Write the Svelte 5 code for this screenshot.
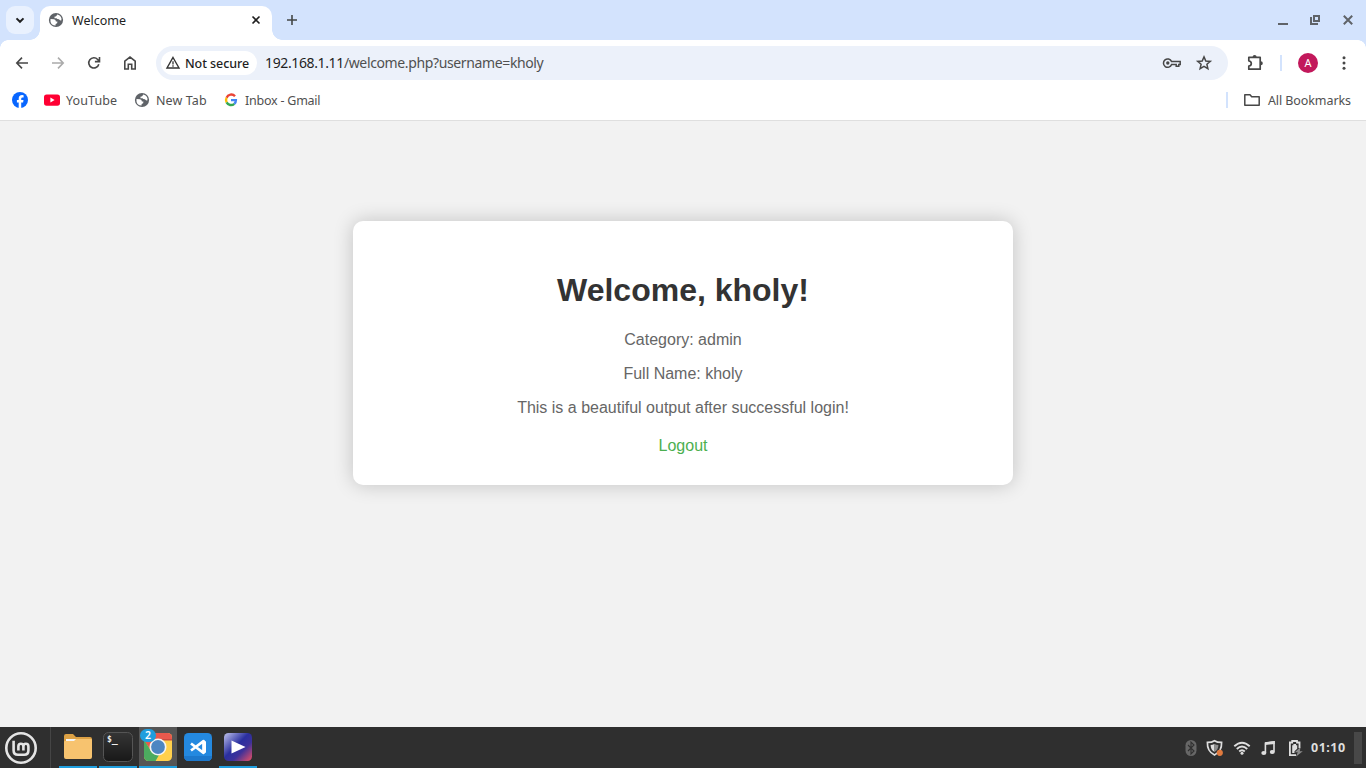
<script>
  const bookmarks = [
    { icon: 'youtube', label: 'YouTube', w: 90, spacing: 0.1 },
    { icon: 'globe', label: 'New Tab', w: 89, spacing: 0.1 },
    { icon: 'google', label: 'Inbox - Gmail', w: 100, spacing: -0.23 }
  ];
</script>

{#snippet globe()}
  <svg width="16" height="16" viewBox="0 0 16 16">
    <circle cx="8" cy="8" r="7.1" fill="#5f6368" />
    <path d="M2.5 7.1 L6 7.2 Q7.9 7.6 7.9 9.4 H9.4 Q9.8 11.6 7.6 11.9 V13.6 Q3.1 13.4 2.5 9.4Z M9.1 2.5 Q12.6 3.2 13.5 6.6 L13.3 8.4 Q11.4 8.7 11 7.3 Q8.8 7.3 8.5 6.3 H6.5 V4.6 Q8.8 4.9 9.1 2.5Z" fill="#fff" />
  </svg>
{/snippet}

<div class="screen">
  <header class="tabs">
    <div class="search-tabs">
      <svg width="28" height="28" viewBox="0 0 28 28"><path d="M10.5 12.4 L14 15.8 L17.5 12.4" fill="none" stroke="#1f1f1f" stroke-width="2" /></svg>
    </div>
    <div class="tab">
      {@render globe()}
      <span class="tab-title">Welcome</span>
      <svg width="16" height="16" viewBox="0 0 16 16"><path d="M4.5 4.5l7 7M11.5 4.5l-7 7" stroke="#1f1f1f" stroke-width="1.6" /></svg>
    </div>
    <svg class="new-tab" width="20" height="20" viewBox="0 0 20 20"><path d="M10 5v10M5 10h10" stroke="#444746" stroke-width="1.6" /></svg>
    <div class="window-buttons">
      <svg width="16" height="16" viewBox="0 0 16 16"><path d="M3 12h10" stroke="#5f6368" stroke-width="2" /></svg>
      <svg width="16" height="16" viewBox="0 0 16 16"><path d="M7 4h5v5H7z M4 5v7h7" fill="none" stroke="#5f6368" stroke-width="2" /></svg>
      <svg width="16" height="16" viewBox="0 0 16 16"><path d="M3.8 3.8l8.4 8.4M12.2 3.8l-8.4 8.4" stroke="#5f6368" stroke-width="2" /></svg>
    </div>
  </header>

  <div class="chrome">
    <nav class="toolbar">
      <div class="nav-buttons">
        <svg width="20" height="20" viewBox="0 0 20 20"><path d="M16 10H5M10 4.6L4.8 10l5.2 5.4" fill="none" stroke="#474747" stroke-width="1.6" /></svg>
        <svg width="20" height="20" viewBox="0 0 20 20"><path d="M4 10h11M10 4.6l5.2 5.4-5.2 5.4" fill="none" stroke="#ababab" stroke-width="1.6" /></svg>
        <svg width="20" height="20" viewBox="0 0 20 20"><path d="M14.8 11.2A5.1 5.1 0 1 1 13.7 6.5L15 8M15.5 4v4.6h-4.6" fill="none" stroke="#474747" stroke-width="1.6" /></svg>
        <svg width="20" height="20" viewBox="0 0 20 20"><path d="M4.8 16V8.1L10 4.1l5.2 4V16h-3.5v-4.8H8.3V16z" fill="none" stroke="#474747" stroke-width="1.6" /></svg>
      </div>
      <div class="omnibox">
        <div class="security">
          <svg width="16" height="16" viewBox="0 0 16 16"><path d="M8 2.500L14 13H2z" fill="none" stroke="#333" stroke-width="1.400" /><path d="M8 6.300v3.200M8 10.300v1.500" stroke="#333" stroke-width="1.300" /></svg>
          <span>Not secure</span>
        </div>
        <span class="url"><b>192.168.1.11</b>/welcome.php?username=kholy</span>
        <div class="omni-actions">
          <svg width="20" height="20" viewBox="0 0 20 20" fill="none" stroke="#474747" stroke-width="1.5"><path d="M9.500 8.400H18.200V11.600H16.800V13.300H14.200V11.600H9.600A4.200 4.200 0 1 1 9.500 8.400Z" /><circle cx="5.800" cy="10" r="1.700" fill="#474747" stroke="none" /></svg>
          <svg width="20" height="20" viewBox="0 0 20 20"><path d="M10 3.900l1.800 4.100 4.500.4-3.400 2.900 1 4.400-3.900-2.300-3.900 2.300 1-4.400-3.400-2.900 4.500-.4z" fill="none" stroke="#474747" stroke-width="1.500" /></svg>
        </div>
      </div>
      <svg class="puzzle" width="20" height="20" viewBox="0 0 20 20"><path d="M3.800 4.400H15.200V16.200H3.800V13.200Q6.300 12.800 6.300 10.500T3.800 7.800Z" fill="none" stroke="#474747" stroke-width="1.700" stroke-linejoin="round" /><path d="M7.600 4a2 2 0 0 1 4 0M15.800 8.300a2 2 0 0 1 0 4" fill="#474747" /></svg>
      <i class="divider"></i>
      <div class="avatar">A</div>
      <svg class="menu" width="16" height="20" viewBox="0 0 16 20" fill="#474747"><circle cx="8" cy="4.700" r="1.500" /><circle cx="8" cy="10" r="1.500" /><circle cx="8" cy="15.300" r="1.500" /></svg>
    </nav>

    <div class="bookmarks">
      <svg class="facebook" width="16" height="16" viewBox="0 0 16 16"><circle cx="8" cy="8" r="8" fill="#0866ff" /><path d="M6.700 15.900V10.500H4.900V8h1.800V6.800C6.700 4.200 7.800 3 10.200 3q.9 0 1.400.2v2.200h-.9C9.500 5.400 9.200 5.900 9.200 7v1h2.300l-.4 2.500H9.200v5.400z" fill="#fff" /></svg>
      {#each bookmarks as b}
        <div class="bookmark" style:width="{b.w}px" style:letter-spacing="{b.spacing}px">
          {#if b.icon === 'youtube'}
            <svg width="16" height="16" viewBox="0 0 16 16"><rect y="2.400" width="16" height="11.300" rx="2.600" fill="#ff0033" /><path d="M6.400 5.600v4.800L10.600 8z" fill="#fff" /></svg>
          {:else if b.icon === 'globe'}
            {@render globe()}
          {:else}
            <svg width="16" height="16" viewBox="0 0 16 16" fill="none" stroke-width="2.400"><path d="M12 4.200A5 5 0 0 0 3.600 5.700" stroke="#ea4335" /><path d="M3.600 5.700A5 5 0 0 0 3.600 10.400" stroke="#fbbc04" /><path d="M3.600 10.400A5 5 0 0 0 11.300 11.800" stroke="#34a853" /><path d="M11.300 11.800A4.800 4.800 0 0 0 12.900 8.100H8" stroke="#4285f4" /></svg>
          {/if}
          <span>{b.label}</span>
        </div>
      {/each}
      <div class="all-bookmarks">
        <i class="divider"></i>
        <svg width="18" height="16" viewBox="0 0 18 16"><path d="M1.800 2.800H7l1.700 2H16.200V13.200H1.800z" fill="none" stroke="#474747" stroke-width="1.500" stroke-linejoin="round" /></svg>
        <span>All Bookmarks</span>
      </div>
    </div>
  </div>

  <main>
    <section class="card">
      <h1>Welcome, kholy!</h1>
      <p>Category: admin</p>
      <p>Full Name: kholy</p>
      <p>This is a beautiful output after successful login!</p>
      <a href="#logout">Logout</a>
    </section>
  </main>

  <footer>
    <div class="start">
      <svg width="34" height="34" viewBox="0 0 34 34" fill="none" stroke="#e4e4e4"><circle cx="17" cy="17" r="14.700" stroke-width="2.600" /><path d="M9.600 9.700V19.500Q9.600 23.700 14 23.700H20.200Q24.400 23.700 24.400 19.500V15.400Q24.400 12.800 21.900 12.800T19.400 15.400V19.500M19.400 15.400Q19.400 12.800 16.900 12.800T14.400 15.400V19.500" stroke-width="2.600" /></svg>
    </div>
    <div class="apps">
      <div class="app open">
        <svg width="30" height="30" viewBox="0 0 30 30"><path d="M1 4q0-2 2-2h7l3 3h14q2 0 2 2v10H1z" fill="#dca145" /><path d="M3 7h24v4H3z" fill="#f4f4f4" /><path d="M1 10q0-1 1-1h9l2-2h15q1 0 1 1v17q0 2-2 2H3q-2 0-2-2z" fill="#f7c36f" /></svg>
      </div>
      <div class="app open">
        <svg width="30" height="30" viewBox="0 0 30 30"><defs><linearGradient id="term" x2="0" y2="1"><stop stop-color="#353535" /><stop offset="1" stop-color="#181818" /></linearGradient></defs><rect x=".5" y=".5" width="29" height="29" rx="5" fill="url(#term)" stroke="#555" /><text x="4" y="9.500" class="prompt">$<tspan class="cursor">_</tspan></text></svg>
      </div>
      <div class="app open active">
        <svg width="30" height="30" viewBox="0 0 30 30"><defs><clipPath id="tile"><rect x="1" y="1" width="28" height="28" rx="4.500" /></clipPath></defs><g clip-path="url(#tile)"><path d="M0 0h30v30H0z" fill="#ffd04c" /><path d="M0 0h30v7H15L7 17 0 7z" fill="#e9594d" /><path d="M0 6L8 19l8 4-4 7H0z" fill="#4cab5f" /><path d="M15 7h15v1.500H15z" fill="#c94b3f" /></g><circle cx="15" cy="15" r="8.500" fill="#f4f4f4" /><circle cx="15" cy="15" r="6.900" fill="#4d86c2" /></svg>
        <span class="badge">2</span>
      </div>
      <div class="app">
        <svg width="30" height="30" viewBox="0 0 30 30"><rect x="1" y="1" width="28" height="28" rx="4.500" fill="#2489e0" /><path d="M1 24q0 5 5 5h18q5 0 5-5" fill="#1d78cc" /><path d="M8 11.500L20.500 20.800V9.200L8 18.500" fill="none" stroke="#fff" stroke-width="2.700" stroke-linejoin="round" /><path d="M20 8l3 1.500v11L20 22z" fill="#fff" /></svg>
      </div>
      <div class="app open">
        <svg width="30" height="30" viewBox="0 0 30 30"><defs><linearGradient id="play" x2="1" y2="1"><stop stop-color="#c0c4ee" /><stop offset=".45" stop-color="#2a2f9f" /><stop offset=".65" stop-color="#3d319a" /><stop offset="1" stop-color="#ec5064" /></linearGradient></defs><rect x="1" y="1" width="28" height="28" rx="4.500" fill="url(#play)" /><path d="M8.500 8.500v13L22.500 15z" fill="#fff" /></svg>
      </div>
    </div>
    <div class="tray">
      <svg width="12" height="18" viewBox="0 0 12 18"><rect x=".5" y="1" width="11" height="16" rx="5.500" fill="#676767" /><path d="M3 6l6 6-3 3V3l3 3-6 6" fill="none" stroke="#303030" stroke-width="1.100" /></svg>
      <svg width="18" height="18" viewBox="0 0 18 18"><path d="M8.500 1.700Q11 3.400 15.600 3.400Q16 12.500 8.500 16Q1 12.500 1.400 3.400Q6 3.400 8.500 1.700Z" fill="none" stroke="#dedede" stroke-width="1.700" /><path d="M8.500 4.900Q6.500 6 4.600 6Q4.600 10.800 8.500 13z" fill="#dedede" /><path d="M8.500 4.900Q10.500 6 12.400 6Q12.400 10.800 8.500 13z" fill="#8d8d8d" /><circle cx="13.800" cy="13.800" r="3.100" fill="#e07a3e" /></svg>
      <svg width="18" height="18" viewBox="0 0 18 18" fill="none" stroke="#dedede" stroke-width="1.900"><path d="M1.300 7.300Q9 .1 16.700 7.300M3.800 10Q9 5.100 14.200 10M6.200 12.500Q9 9.900 11.800 12.500" /><circle cx="9" cy="14.200" r="1.500" fill="#dedede" stroke="none" /></svg>
      <svg width="16" height="18" viewBox="0 0 16 18"><path d="M5.400 14V4.200L14 3v9.700" fill="none" stroke="#dedede" stroke-width="1.600" /><path d="M5 3.200L14.800 2v3L5 6z" fill="#dedede" /><ellipse cx="3.800" cy="14" rx="2.500" ry="2" fill="#dedede" /><ellipse cx="12.300" cy="13" rx="2.500" ry="2" fill="#dedede" /></svg>
      <svg class="battery" width="16" height="18" viewBox="0 0 16 18"><path d="M9 16.100H2.900V3.500H5.200V2H10v1.500h2.500V9" fill="none" stroke="#dedede" stroke-width="1.800" /><path d="M5.200 6.200h1.200V5h2.600v1.200h1.200v3.600L7.500 12.200V14H5.200z" fill="#dedede" /><path d="M13.600 8L7.800 13.300h3L8.800 17.800 15.800 12.200h-3z" fill="#8a8a8a" /></svg>
    </div>
    <time>01:10</time>
    <i class="show-desktop"></i>
  </footer>
</div>

<style>
  :global(body) { margin: 0; overflow: hidden; }
  .screen { width: 1366px; height: 768px; display: flex; flex-direction: column; font-family: "Noto Sans", "Open Sans", sans-serif; background: #f2f2f2; }
  svg { display: block; flex: none; }
  .screen :where(span, b, time) { white-space: nowrap; }

  .tabs { height: 40px; display: flex; background: #d3e3fd; flex: none; }
  .search-tabs { width: 28px; height: 28px; margin: 6px 6px 0; border-radius: 9px; background: #e9f1fe; }
  .tab { width: 216px; height: 34px; margin-top: 6px; padding: 0 8px; display: flex; align-items: center; box-sizing: content-box; background: #fff; border-radius: 10px 10px 0 0; position: relative; }
  .tab svg { margin-top: -6px; }
  .tab::before, .tab::after { content: ""; position: absolute; bottom: 0; width: 10px; height: 10px; }
  .tab::before { left: -10px; background: radial-gradient(circle at 0 0, transparent 9.5px, #fff 10px); }
  .tab::after { right: -10px; background: radial-gradient(circle at 100% 0, transparent 9.5px, #fff 10px); }
  .tab-title { flex: 1; margin: -6px 0 0 8px; font-size: 12.5px; color: #1f1f1f; }
  .new-tab { margin: 10px 0 0 10px; }
  .window-buttons { margin: 12px 10px 0 auto; display: flex; gap: 16px; }
  .window-buttons svg:nth-child(2) { margin-right: 1px; }

  .chrome { height: 80px; flex: none; background: #fff; border-bottom: 1px solid #dfdfdf; position: relative; }
  .chrome::before, .chrome::after { content: ""; position: absolute; top: 0; width: 8px; height: 8px; }
  .chrome::before { left: 0; background: radial-gradient(circle at 100% 100%, transparent 7.5px, #d3e3fd 8px); }
  .chrome::after { right: 0; background: radial-gradient(circle at 0 100%, transparent 7.5px, #d3e3fd 8px); }
  .toolbar { height: 46px; display: flex; align-items: center; padding-left: 12px; }
  .nav-buttons { display: flex; gap: 16px; width: 144px; }
  .omnibox { width: 1072px; height: 34px; border-radius: 17px; background: #ecf1fa; display: flex; align-items: center; box-sizing: border-box; padding: 0 14px 0 5px; }
  .security { width: 96px; height: 24px; border-radius: 12px; background: #fff; display: flex; align-items: center; gap: 4px; box-sizing: border-box; padding-left: 4px; font-size: 12.5px; font-weight: 500; letter-spacing: -.08px; color: #1f1f1f; }
  .url { margin: 0 0 2px 8px; font-size: 14px; letter-spacing: -.37px; color: #505050; }
  .url b { font-weight: 400; color: #1f1f1f; }
  .omni-actions { display: flex; gap: 12px; margin-left: auto; }
  .puzzle { margin-left: 17px; }
  .divider { width: 2px; height: 16px; background: #d3e3fd; flex: none; }
  .toolbar .divider { margin-left: 15px; }
  .avatar { width: 20px; height: 20px; margin-left: 16px; border-radius: 50%; background: #c2185b; color: #fff; font-size: 11px; line-height: 20px; text-align: center; }
  .menu { margin-left: 18px; }
  .bookmarks { height: 28px; display: flex; align-items: center; padding-left: 12px; font-size: 12.5px; color: #505050; }
  .facebook { margin-right: 16px; }
  .bookmark { display: flex; align-items: center; gap: 6px; }
  .all-bookmarks { margin-left: auto; display: flex; align-items: center; padding-right: 15px; letter-spacing: -.08px; }
  .all-bookmarks svg { margin: 0 7px 0 15px; }

  main { flex: 1; font-family: "Liberation Sans", Arial, sans-serif; display: flex; justify-content: center; align-items: flex-start; padding-top: 100px; }
  .card { width: 600px; padding: 30px; background: #fff; border-radius: 10px; text-align: center; box-shadow: 0 0 20px rgba(0, 0, 0, .2); }
  h1 { margin: 21.44px 0; font-size: 32px; line-height: 37px; color: #333; }
  p { margin: 16px 0; font-size: 16px; line-height: 18px; color: #666; }
  .card a { display: inline-block; margin-top: 4px; font-size: 16px; line-height: 18px; vertical-align: top; color: #4caf50; text-decoration: none; }

  footer { height: 41px; flex: none; display: flex; align-items: center; background: #2f2f2f; }
  .start { width: 51px; height: 41px; padding: 4px 0 0 4px; box-sizing: border-box; border-right: 1px solid #454545; }
  .apps { display: flex; gap: 2px; height: 41px; margin-left: 8px; }
  .app { width: 38px; height: 41px; box-sizing: border-box; padding: 5px 4px 0; position: relative; }
  .open { border-bottom: 2px solid #1f9ede; }
  .active { background: #555; }
  .badge { position: absolute; left: 1px; top: 2px; width: 16px; height: 13px; border-radius: 7px; background: #1f9ede; color: #fff; font-size: 10.5px; font-weight: 600; line-height: 13px; text-align: center; }
  .prompt { font: bold 8px "DejaVu Sans Mono", monospace; fill: #eee; }
  .cursor { font-size: 10px; }
  .tray { display: flex; align-items: center; margin-left: auto; gap: 9px; }
  .battery { margin-left: 2px; }
  time { margin: 0 0 0 8px; width: 43px; font-size: 12.5px; font-weight: 700; letter-spacing: .5px; color: #dedede; }
  .show-desktop { width: 8px; height: 32px; background: #484848; margin-right: 4px; }
</style>
